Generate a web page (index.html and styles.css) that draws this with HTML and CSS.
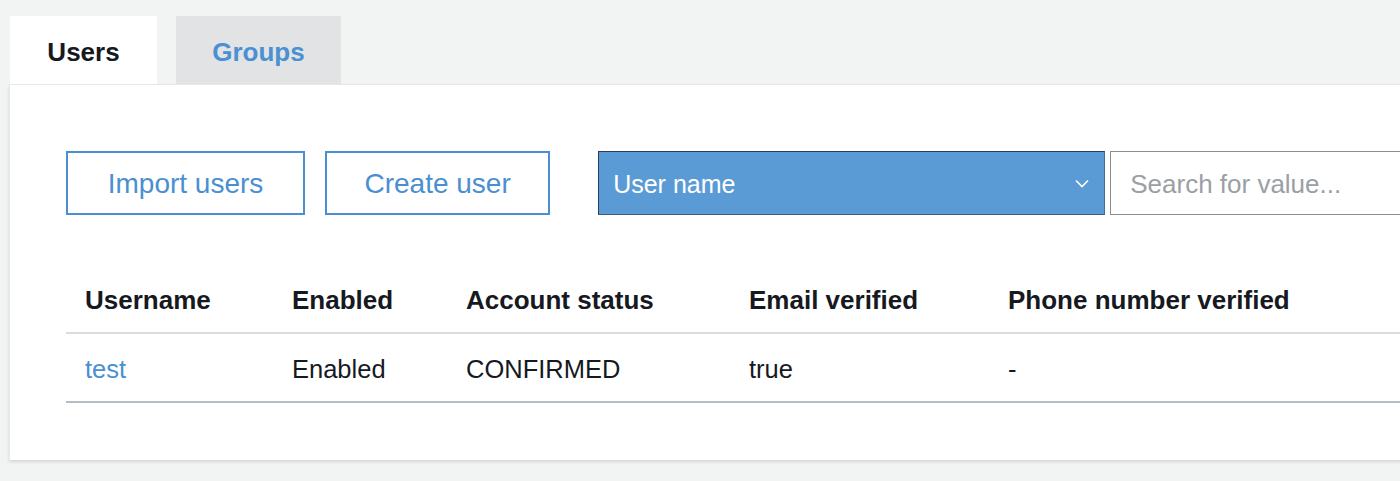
FILE: index.html
```html
<!DOCTYPE html>
<html>
<head>
<meta charset="utf-8">
<link rel="stylesheet" href="styles.css">
</head>
<body>
<div class="tabs">
  <div class="tab active">Users</div>
  <div class="tab">Groups</div>
</div>
<div class="panel">
  <div class="toolbar">
    <button class="btn btn-import">Import users</button>
    <button class="btn btn-create">Create user</button>
    <div class="select">
      <span>User name</span>
      <svg class="chev" width="14" height="9" viewBox="0 0 14 9"><path d="M1 1.5 L7 7.5 L13 1.5" fill="none" stroke="#fff" stroke-width="1.6"/></svg>
    </div>
    <div class="search">Search for value...</div>
  </div>
  <table class="users">
    <thead>
      <tr>
        <th class="c1">Username</th>
        <th class="c2">Enabled</th>
        <th class="c3">Account status</th>
        <th class="c4">Email verified</th>
        <th class="c5">Phone number verified</th>
      </tr>
    </thead>
    <tbody>
      <tr>
        <td><a class="link">test</a></td>
        <td>Enabled</td>
        <td>CONFIRMED</td>
        <td>true</td>
        <td>-</td>
      </tr>
    </tbody>
  </table>
</div>
</body>
</html>
```

FILE: styles.css
```css
html, body {
  margin: 0;
  padding: 0;
  background: #f2f3f3;
  font-family: "Liberation Sans", Arial, sans-serif;
  color: #16191f;
  overflow: hidden;
}
body {
  padding-top: 16px;
  width: 1400px;
  height: 481px;
}
.tabs {
  display: flex;
  gap: 19px;
  padding-left: 10px;
  height: 68px;
}
.tab {
  height: 68px;
  font-size: 26px;
  font-weight: bold;
  display: flex;
  align-items: center;
  justify-content: center;
  box-sizing: border-box;
  padding-top: 4px;
}
.tab.active {
  width: 147px;
  background: #fff;
  color: #16191f;
}
.tab:not(.active) {
  width: 165px;
  background: #e2e3e4;
  color: #4a90d2;
}
.panel {
  margin-left: 9px;
  width: 1420px;
  height: 376px;
  background: #fff;
  border-top: 1px solid #e6e7e8;
  border-left: 1px solid #e6e7e8;
  box-shadow: 0 2px 3px rgba(0,0,0,0.12);
  box-sizing: border-box;
  padding: 66px 0 0 56px;
}
.toolbar {
  display: flex;
  align-items: center;
  height: 64px;
}
.btn {
  height: 64px;
  background: #fff;
  border: 2px solid #4a8fd1;
  color: #4a8fd1;
  font-family: "Liberation Sans", Arial, sans-serif;
  font-size: 28px;
  padding: 2px 0 0 0;
  box-sizing: border-box;
}
.btn-import { width: 240px; }
.btn-create { width: 226px; margin-left: 20px; }
.select {
  margin-left: 48px;
  width: 509px;
  height: 64px;
  box-sizing: border-box;
  background: #5b9bd5;
  border: 1px solid #2a3f55;
  border-right-color: #3e6e9c;
  border-bottom-color: #3a5f85;
  color: #fff;
  font-size: 25px;
  display: flex;
  align-items: center;
  justify-content: space-between;
  padding: 2px 15px 0 14px;
}
.chev { margin-top: -2px; }
.search {
  margin-left: 5px;
  width: 320px;
  height: 64px;
  box-sizing: border-box;
  border: 1px solid #8a8f94;
  border-right: none;
  background: #fff;
  color: #9aa0a4;
  font-size: 26px;
  display: flex;
  align-items: center;
  padding: 2px 0 0 19px;
}
.users {
  margin-top: 53px;
  border-collapse: collapse;
  width: 1360px;
}
.users th, .users td {
  text-align: left;
  padding: 0 0 0 19px;
  white-space: nowrap;
}
.users th {
  font-size: 26px;
  font-weight: bold;
  height: 64px;
  border-bottom: 2px solid #dadcde;
  vertical-align: middle;
}
.users td {
  font-size: 25.5px;
  height: 69px;
  padding-top: 3px;
  box-sizing: border-box;
  border-bottom: 2px solid #b5bcc2;
}
.c1 { width: 188px; }
.c2 { width: 155px; }
.c3 { width: 264px; }
.c4 { width: 240px; }
.link { color: #4a8fd1; }
```
